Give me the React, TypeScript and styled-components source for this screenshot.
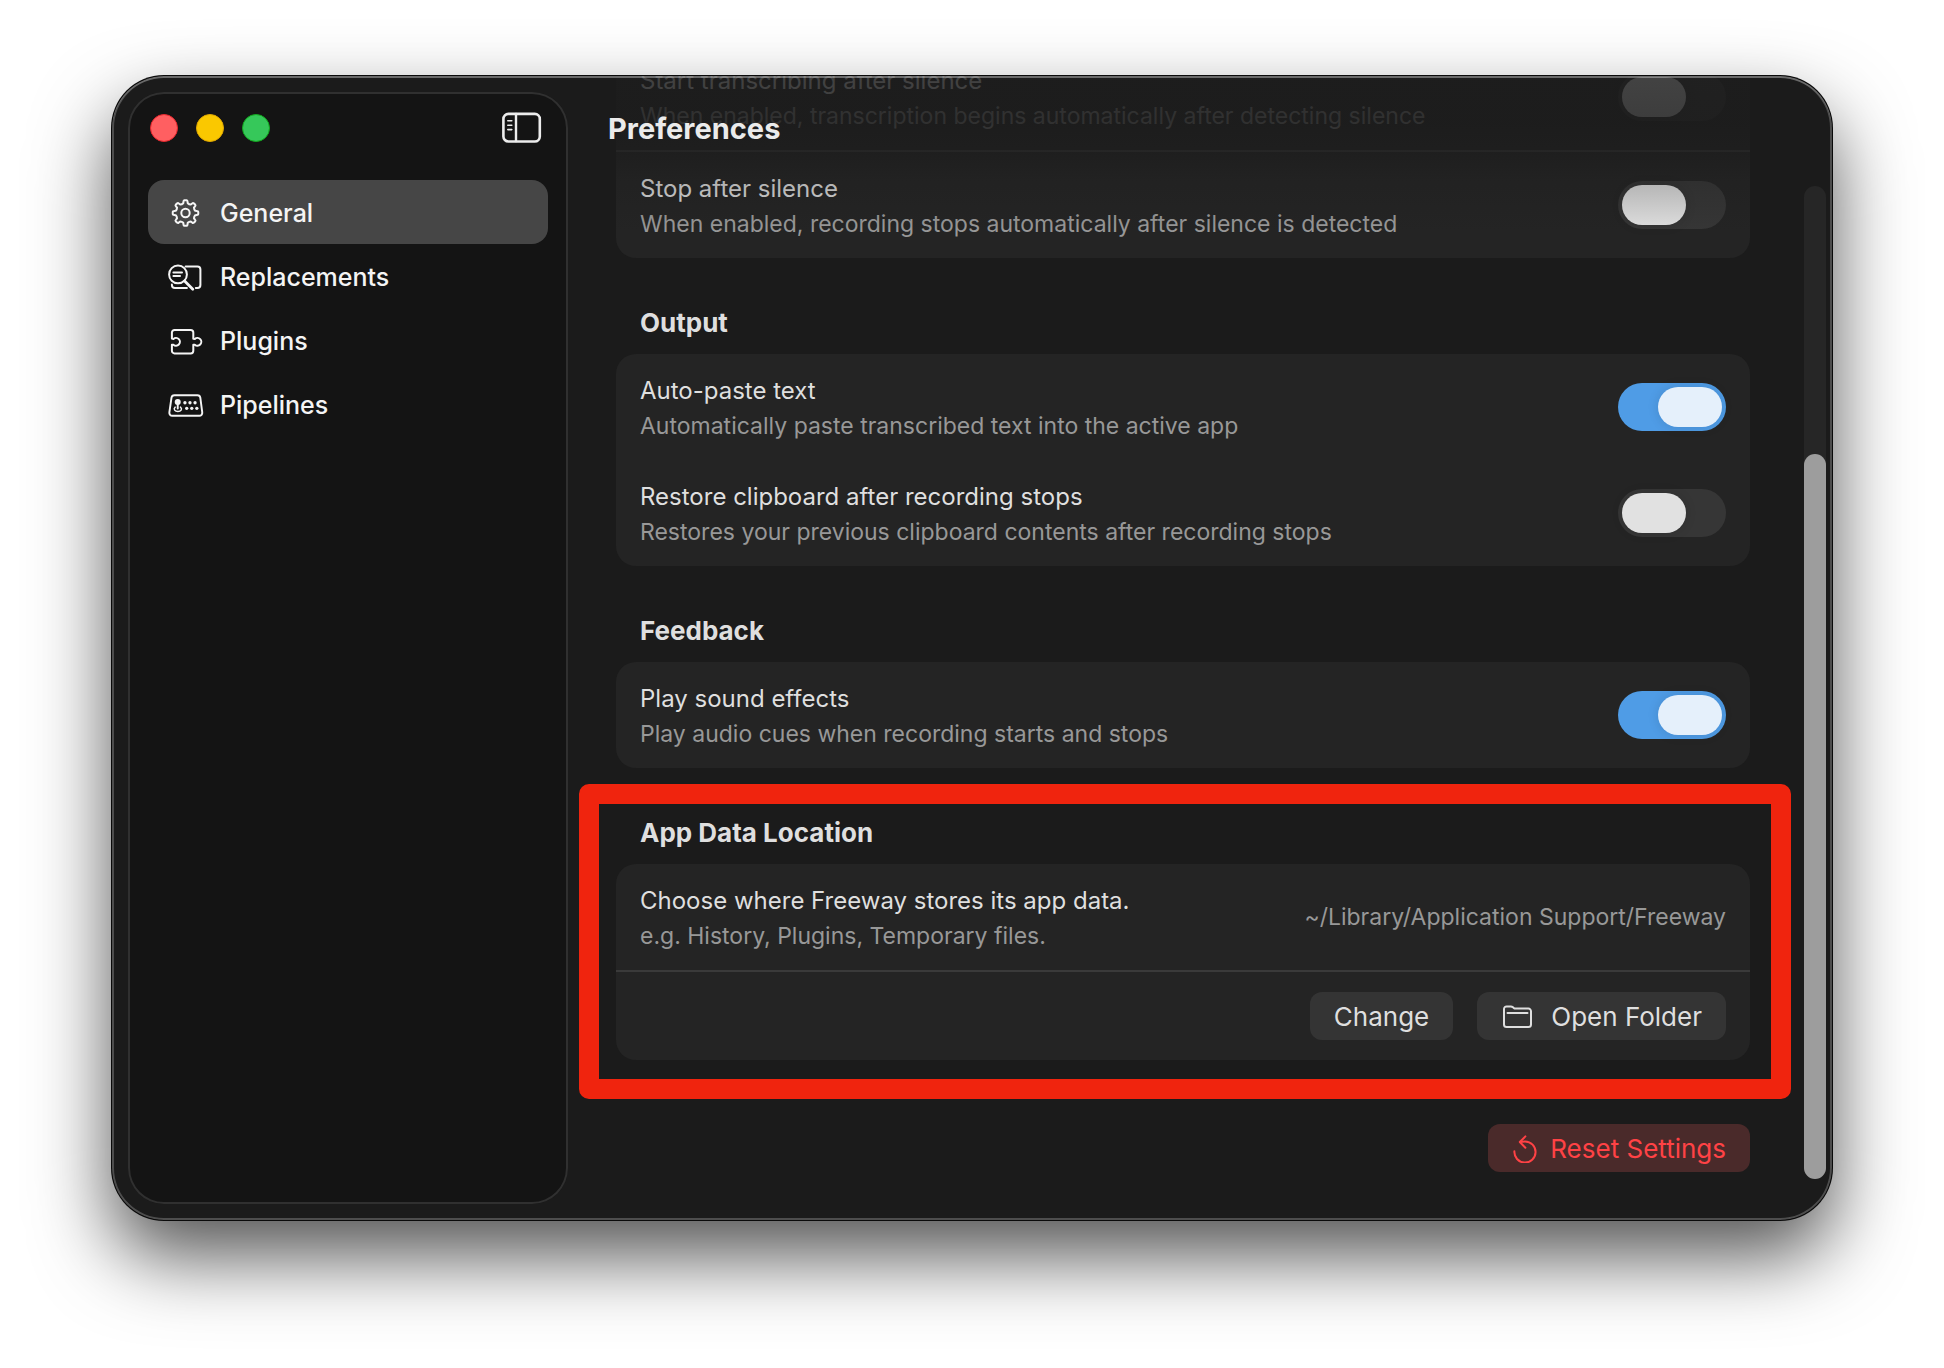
import React, { useId, useState } from "react";
import styled, { createGlobalStyle, css } from "styled-components";

const color = {
  window: "#1b1b1b",
  sidebar: "#141414",
  card: "#242424",
  line: "#3a3a3a",
  text: "#dfdfdf",
  muted: "#989898",
  accent: "#4f9ce6",
  danger: "#ff4245",
  mark: "#f0240e",
};

const GlobalStyle = createGlobalStyle`
  *, *::before, *::after { box-sizing: border-box; }
  body {
    margin: 0;
    background: #fff;
    font-family: Inter, "Liberation Sans", sans-serif;
    -webkit-font-smoothing: antialiased;
  }
  h1, h2, p { margin: 0; }
`;

/* ---------- window ---------- */

const Desktop = styled.div`
  display: flex;
  height: 100vh;
  padding: 76px 112px 148px;
`;

const Window = styled.div`
  position: relative;
  display: flex;
  flex: 1;
  min-width: 0;
  border-radius: 52px;
  background: ${color.window};
  box-shadow: 0 0 0 1px #0a0a0a, 0 36px 78px rgba(0, 0, 0, 0.68);
  overflow: hidden;

  &::after {
    content: "";
    position: absolute;
    inset: 0;
    border-radius: inherit;
    box-shadow: inset 0 0 0 2px rgba(255, 255, 255, 0.22),
      inset 0 2px 0 rgba(255, 255, 255, 0.16);
    pointer-events: none;
  }
`;

/* ---------- sidebar ---------- */

const Sidebar = styled.aside`
  flex: none;
  width: 440px;
  margin: 16px 0 16px 16px;
  padding: 0 20px;
  border-radius: 36px;
  background: ${color.sidebar};
  box-shadow: inset 0 0 0 2px #303030;
`;

const TitleBar = styled.div`
  display: flex;
  align-items: center;
  justify-content: space-between;
  height: 72px;
  margin-bottom: 16px;
  padding: 0 6px 0 2px;
`;

const Lights = styled.div`
  display: flex;
  gap: 18px;
`;

const Light = styled.button<{ $fill: string; $edge: string }>`
  width: 28px;
  height: 28px;
  padding: 0;
  border: 1px solid ${(p) => p.$edge};
  border-radius: 50%;
  background: ${(p) => p.$fill};
`;

const IconButton = styled.button`
  display: flex;
  padding: 0;
  border: 0;
  background: none;
  color: #ececec;
`;

const NavItem = styled.button<{ $active?: boolean }>`
  display: flex;
  align-items: center;
  gap: 16px;
  width: 100%;
  height: 64px;
  padding: 1px 20px 0;
  border: 0;
  border-radius: 16px;
  background: ${(p) => (p.$active ? "#464646" : "transparent")};
  color: #f4f4f4;
  font: 500 25px/32px Inter, "Liberation Sans", sans-serif;
  text-align: left;
`;

/* ---------- preferences pane ---------- */

const Pane = styled.main`
  position: relative;
  display: flex;
  flex: 1;
  min-width: 0;
`;

const PaneHeader = styled.header`
  position: absolute;
  inset: 0 28px auto 0;
  height: 156px;
  padding: 0 40px;
  background: linear-gradient(
    rgba(27, 27, 27, 0.8) 0,
    rgba(27, 27, 27, 0.83) 46px,
    rgba(27, 27, 27, 0.66) 74px,
    rgba(27, 27, 27, 0.24) 104px,
    rgba(27, 27, 27, 0) 156px
  );
  pointer-events: none;
`;

const PaneTitle = styled.h1`
  color: #ebebeb;
  font-size: 29px;
  font-weight: 700;
  line-height: 106px;
`;

/* A reversed column keeps the list resting at its end. */
const Scroller = styled.div`
  display: flex;
  flex: 1;
  flex-direction: column-reverse;
  min-width: 0;
  overflow: hidden auto;
  scrollbar-width: none;
`;

const Sections = styled.div`
  display: flex;
  flex: none;
  flex-direction: column;
  gap: 48px;
  padding: 0 54px 48px 48px;
`;

const ScrollTrack = styled.div`
  display: flex;
  align-items: flex-end;
  width: 22px;
  margin: 110px 6px 41px 0;
  border-radius: 11px;
  background: #262626;
`;

const ScrollThumb = styled.div`
  width: 100%;
  height: 73%;
  border-radius: 11px;
  background: #9d9d9d;
`;

const Section = styled.section`
  position: relative;
`;

const SectionTitle = styled.h2`
  margin: 0 24px 14px;
  color: ${color.text};
  font-size: 26px;
  font-weight: 700;
  line-height: 34px;
`;

const Card = styled.div`
  border-radius: 20px;
  background: ${color.card};
`;

const Row = styled.div<{ $divided?: boolean }>`
  display: flex;
  align-items: center;
  justify-content: space-between;
  padding: 18px 24px;
  ${(p) =>
    p.$divided &&
    css`
      border-bottom: 2px solid ${color.line};
    `}
`;

const RowLabel = styled.label`
  display: block;
  color: ${color.text};
  font-size: 24px;
  line-height: 38px;
`;

const RowNote = styled.p`
  color: ${color.muted};
  font-size: 23px;
  line-height: 32px;
`;

const Switch = styled.input`
  flex: none;
  appearance: none;
  width: 108px;
  height: 48px;
  margin: 0;
  padding: 4px;
  border-radius: 24px;
  background: #363636;

  &::before {
    content: "";
    display: block;
    width: 64px;
    height: 40px;
    border-radius: 20px;
    background: #e1e1e1;
    box-shadow: 0 0 12px rgba(0, 0, 0, 0.12);
  }

  &:checked {
    background: ${color.accent};
  }

  &:checked::before {
    margin-left: auto;
    background: #e5f0fb;
  }
`;

const Actions = styled.div`
  display: flex;
  justify-content: flex-end;
  gap: 24px;
  padding: 20px 24px;
`;

const Button = styled.button<{ $danger?: boolean }>`
  display: flex;
  align-items: center;
  gap: ${(p) => (p.$danger ? 12 : 18)}px;
  height: 48px;
  padding: 1px 24px 0;
  border: 0;
  border-radius: 12px;
  background: ${(p) => (p.$danger ? "#4a2a2a" : "#343434")};
  color: ${(p) => (p.$danger ? color.danger : color.text)};
  font: 400 26px/32px Inter, "Liberation Sans", sans-serif;
`;

const Footer = styled.div`
  display: flex;
  justify-content: flex-end;
  padding-top: 16px;
`;

const Marker = styled.div`
  position: absolute;
  inset: -32px -41px -39px -37px;
  border: 20px solid ${color.mark};
  border-radius: 10px;
  pointer-events: none;
`;

/* ---------- icons ---------- */

const Icon = styled.svg`
  flex: none;
  display: block;
  fill: none;
  stroke: currentColor;
  stroke-width: 2;
  stroke-linecap: round;
  stroke-linejoin: round;
`;

function gearPath(cx: number, cy: number) {
  const at = (r: number, deg: number) => {
    const a = (deg * Math.PI) / 180;
    return `${(cx + r * Math.sin(a)).toFixed(2)} ${(cy - r * Math.cos(a)).toFixed(2)}`;
  };
  let d = "";
  for (let i = 0; i < 8; i++) {
    const t = i * 45;
    d += `${i ? "L" : "M"}${at(10, t - 13)}L${at(11.6, t - 10)}Q${at(12.8, t - 9)} ${at(12.8, t - 5)}`;
    d += `L${at(12.8, t + 5)}Q${at(12.8, t + 9)} ${at(11.6, t + 10)}L${at(10, t + 13)}`;
    d += `Q${at(9.2, t + 22.5)} ${at(10, t + 32)}`;
  }
  return d + "Z";
}

const GearIcon = () => (
  <Icon width="36" height="36" viewBox="0 0 36 36" aria-hidden="true">
    <path d={gearPath(17.5, 18)} />
    <circle cx="17.5" cy="18" r="4.2" />
  </Icon>
);

const ReplaceIcon = () => (
  <Icon width="36" height="36" viewBox="0 0 36 36" aria-hidden="true">
    <circle cx="10" cy="15.4" r="8.9" />
    <path d="M5.4 13.4h8.6M5.4 17h6.6" />
    <path d="M17.6 7.4h11.8a3 3 0 0 1 3 3V26a3 3 0 0 1-3 3h-1.6M3.9 25.4V26a3 3 0 0 0 3 3h12" />
    <path d="M16.6 22l8.2 8.2" strokeWidth="2.8" />
  </Icon>
);

const PuzzleIcon = () => (
  <Icon width="36" height="36" viewBox="0 0 36 36" aria-hidden="true">
    <path d="M3.9 15.6V9.6a2.6 2.6 0 0 1 2.6-2.6h16.2a2.6 2.6 0 0 1 2.6 2.6v6.2l1.5.1a3.9 3.9 0 1 1 0 5.8l-1.5.1v6a2.6 2.6 0 0 1-2.6 2.6H6.5a2.6 2.6 0 0 1-2.6-2.6v-6l1.5-.1a3.9 3.9 0 1 0 0-5.8z" />
  </Icon>
);

const PipelineIcon = () => (
  <Icon width="36" height="36" viewBox="0 0 37 36" aria-hidden="true">
    <path d="M6.6 7.9h23.6a3 3 0 0 1 3 2.6l2 15.2a3 3 0 0 1-3 3.4H4.4a3 3 0 0 1-3-3.4l2.2-15.2a3 3 0 0 1 3-2.6z" />
    <circle cx="10" cy="14.9" r="3.1" fill="currentColor" stroke="none" />
    <path d="M10 17v4.6" />
    <path d="M7.4 20.2c-2.4 2.2-.2 4.4 2.8 4.4s5-2.2 2.6-4.4" strokeWidth="1.5" />
    <g fill="currentColor" stroke="none">
      <circle cx="17.4" cy="15.7" r="1.7" />
      <circle cx="22.6" cy="15.7" r="1.7" />
      <circle cx="27.8" cy="15.7" r="1.7" />
      <circle cx="19.2" cy="21.4" r="1.7" />
      <circle cx="24.4" cy="21.4" r="1.7" />
      <circle cx="29.6" cy="21.4" r="1.7" />
    </g>
  </Icon>
);

const SidebarIcon = () => (
  <Icon width="40" height="32" viewBox="0 0 40 32" aria-hidden="true">
    <rect x="1.4" y="1.9" width="36.4" height="27.6" rx="5" strokeWidth="2.6" />
    <path d="M14 2v27" strokeWidth="2.4" />
    <path d="M5.8 8.8h4M5.8 13.2h4M5.8 17.6h4" strokeWidth="1.6" />
  </Icon>
);

const FolderIcon = () => (
  <Icon width="32" height="24" viewBox="0 0 32 24" aria-hidden="true">
    <path d="M3 19.5V4a2.6 2.6 0 0 1 2.6-2.6h4.2c1 0 1.5.3 2.2.9l.7.6c.6.5 1 .7 1.9.7h12.8A2.6 2.6 0 0 1 30 6.2v13.3a2.6 2.6 0 0 1-2.6 2.6H5.6A2.6 2.6 0 0 1 3 19.5z" />
    <path d="M6.5 8h20" />
  </Icon>
);

const ResetIcon = () => (
  <Icon width="26" height="28" viewBox="0 0 26 28" aria-hidden="true">
    <path d="M2.4 16.2A10.6 10.6 0 1 0 13 6.4c-1.8 0-3.4.2-4.8.8" />
    <path d="M13.4 1.4L7.8 7l5.6 5.8" />
  </Icon>
);

/* ---------- parts ---------- */

const pages = [
  { name: "General", icon: <GearIcon /> },
  { name: "Replacements", icon: <ReplaceIcon /> },
  { name: "Plugins", icon: <PuzzleIcon /> },
  { name: "Pipelines", icon: <PipelineIcon /> },
];

function ToggleRow(props: { label: string; note: string; on?: boolean; divided?: boolean }) {
  const id = useId();
  const [on, setOn] = useState(!!props.on);
  return (
    <Row $divided={props.divided}>
      <div>
        <RowLabel htmlFor={id}>{props.label}</RowLabel>
        <RowNote id={id + "-note"}>{props.note}</RowNote>
      </div>
      <Switch
        id={id}
        type="checkbox"
        role="switch"
        aria-describedby={id + "-note"}
        checked={on}
        onChange={(e) => setOn(e.target.checked)}
      />
    </Row>
  );
}

export default function App() {
  const [page, setPage] = useState("General");
  return (
    <>
      <GlobalStyle />
      <Desktop>
        <Window>
          <Sidebar>
            <TitleBar>
              <Lights>
                <Light $fill="#ff5f61" $edge="#e8262d" aria-label="Close" />
                <Light $fill="#fac800" $edge="#e0a800" aria-label="Minimize" />
                <Light $fill="#36c85a" $edge="#12a81e" aria-label="Zoom" />
              </Lights>
              <IconButton aria-label="Toggle sidebar">
                <SidebarIcon />
              </IconButton>
            </TitleBar>
            <nav>
              {pages.map((p) => (
                <NavItem
                  key={p.name}
                  $active={p.name === page}
                  aria-current={p.name === page ? "page" : undefined}
                  onClick={() => setPage(p.name)}
                >
                  {p.icon}
                  {p.name}
                </NavItem>
              ))}
            </nav>
          </Sidebar>

          <Pane>
            <Scroller>
              <Sections>
                <Card>
                  <ToggleRow
                    divided
                    label="Start transcribing after silence"
                    note="When enabled, transcription begins automatically after detecting silence"
                  />
                  <ToggleRow
                    label="Stop after silence"
                    note="When enabled, recording stops automatically after silence is detected"
                  />
                </Card>

                <Section>
                  <SectionTitle>Output</SectionTitle>
                  <Card>
                    <ToggleRow
                      on
                      label="Auto-paste text"
                      note="Automatically paste transcribed text into the active app"
                    />
                    <ToggleRow
                      label="Restore clipboard after recording stops"
                      note="Restores your previous clipboard contents after recording stops"
                    />
                  </Card>
                </Section>

                <Section>
                  <SectionTitle>Feedback</SectionTitle>
                  <Card>
                    <ToggleRow
                      on
                      label="Play sound effects"
                      note="Play audio cues when recording starts and stops"
                    />
                  </Card>
                </Section>

                <Section>
                  <SectionTitle>App Data Location</SectionTitle>
                  <Card>
                    <Row $divided>
                      <div>
                        <RowLabel as="p">Choose where Freeway stores its app data.</RowLabel>
                        <RowNote>e.g. History, Plugins, Temporary files.</RowNote>
                      </div>
                      <RowNote>~/Library/Application Support/Freeway</RowNote>
                    </Row>
                    <Actions>
                      <Button>Change</Button>
                      <Button>
                        <FolderIcon />
                        Open Folder
                      </Button>
                    </Actions>
                  </Card>
                  <Marker />
                </Section>

                <Footer>
                  <Button $danger>
                    <ResetIcon />
                    Reset Settings
                  </Button>
                </Footer>
              </Sections>
            </Scroller>
            <ScrollTrack>
              <ScrollThumb />
            </ScrollTrack>
            <PaneHeader>
              <PaneTitle>Preferences</PaneTitle>
            </PaneHeader>
          </Pane>
        </Window>
      </Desktop>
    </>
  );
}
